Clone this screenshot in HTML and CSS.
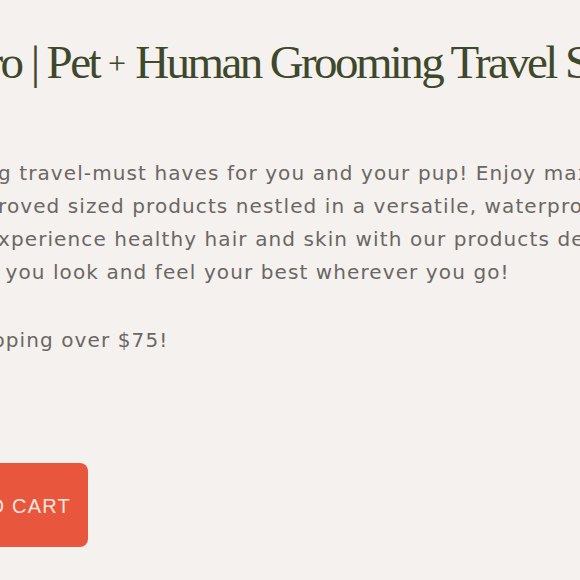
FILE: index.html
```html
<!DOCTYPE html>
<html lang="en">
<head>
<meta charset="utf-8">
<title>Pet + Human Grooming Travel Set</title>
<link rel="stylesheet" href="styles.css">
</head>
<body>
<main class="product">
  <h1 class="product-title">Pro | Pet <span class="plus">+</span> Human Grooming Travel Set</h1>
  <div class="product-description">
    <p class="desc-text">g travel-must haves for you and your pup! Enjoy maximum<br>roved sized products nestled in a versatile, waterproof<br>xperience healthy hair and skin with our products designed<br>&nbsp;you look and feel your best wherever you go!</p>
    <p class="desc-text shipping">pping over $75!</p>
  </div>
  <div class="product-actions">
    <button class="add-to-cart" type="button">ADD TO CART</button>
  </div>
</main>
</body>
</html>
```
FILE: styles.css
```css
html, body {
  margin: 0;
  padding: 0;
}
body {
  background: #f5f1ee;
  overflow: hidden;
  width: 580px;
  height: 580px;
}
.product {
  display: flex;
  flex-direction: column;
  padding-top: 32px;
}
.product-title {
  margin: 0 0 0 -36px;
  font-family: "Liberation Serif", "DejaVu Serif", serif;
  font-weight: 400;
  font-size: 47px;
  line-height: 60px;
  letter-spacing: -2.6px;
  color: #3e482b;
  white-space: nowrap;
}
.plus {
  font-size: 32px;
  letter-spacing: 0;
  vertical-align: 4px;
}
.product-description {
  margin-top: 64px;
  margin-left: -2px;
}
.desc-text {
  margin: 0;
  font-family: "DejaVu Sans", "Open Sans", sans-serif;
  font-size: 20px;
  line-height: 33px;
  letter-spacing: 1.1px;
  color: #6b6764;
  white-space: nowrap;
}
.shipping {
  margin-top: 35px;
  text-indent: -6px;
}
.product-actions {
  margin-top: 106px;
  display: flex;
}
.add-to-cart {
  width: 240px;
  height: 84px;
  margin-left: -152px;
  padding: 2px 17px 0 0;
  border: 0;
  border-radius: 8px;
  background: #e8573d;
  color: #fde5dd;
  font-family: "Liberation Sans", Arial, sans-serif;
  font-size: 20px;
  letter-spacing: 1.2px;
  text-align: right;
}
```
